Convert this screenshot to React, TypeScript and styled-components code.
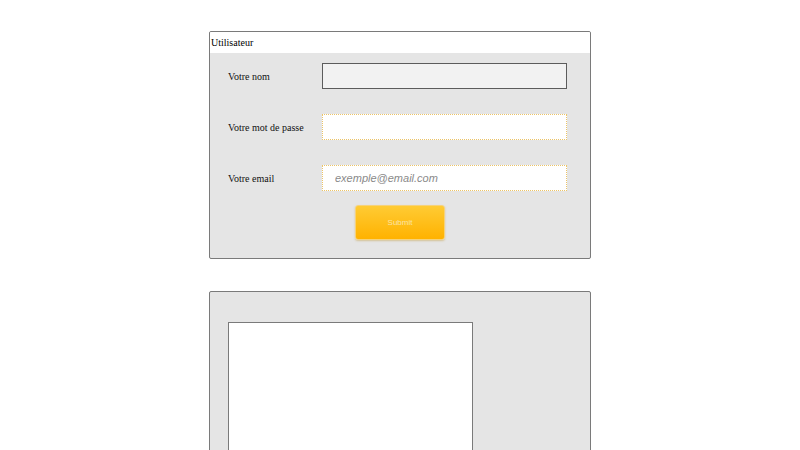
import styled, { createGlobalStyle } from 'styled-components';

const GlobalStyle = createGlobalStyle`
  html, body {
    margin: 0;
    padding: 0;
    background: #ffffff;
  }
  body {
    font-family: "Liberation Serif", "Times New Roman", serif;
    overflow: hidden;
  }
`;

const Page = styled.div`
  display: flex;
  flex-direction: column;
  align-items: center;
  gap: 32px;
  padding-top: 31px;
  height: 450px;
  box-sizing: border-box;
`;

const Panel = styled.section`
  width: 382px;
  box-sizing: border-box;
  border: 1px solid #7a7a7a;
  border-radius: 2px;
  background: #e5e5e5;
  overflow: hidden;
  flex-shrink: 0;
`;

const PanelHeader = styled.div`
  background: #ffffff;
  height: 21px;
  line-height: 21px;
  padding-left: 1px;
  font-size: 10px;
  color: #000;
`;

const Form = styled.form`
  display: flex;
  flex-direction: column;
  gap: 25px;
  padding: 10px 23px 18px 18px;
`;

const Row = styled.div`
  display: flex;
  align-items: center;
`;

const Label = styled.label`
  width: 94px;
  font-size: 10px;
  color: #111;
`;

const Input = styled.input<{ $locked?: boolean }>`
  width: 245px;
  height: 26px;
  box-sizing: border-box;
  padding: 0 12px;
  font-family: "Liberation Sans", Arial, sans-serif;
  font-size: 11px;
  outline: none;
  border-radius: 0;
  background: ${(p) => (p.$locked ? '#f2f2f2' : '#ffffff')};
  border: ${(p) => (p.$locked ? '1px solid #5c5c5c' : '1px dotted #ecc468')};

  &::placeholder {
    color: #8a8a8a;
    font-style: italic;
  }
`;

const Actions = styled.div`
  display: flex;
  padding-left: 127px;
  margin-top: -11px;
`;

const Submit = styled.button`
  width: 90px;
  height: 35px;
  box-sizing: border-box;
  border: 1px solid #f6d27a;
  border-radius: 3px;
  background: linear-gradient(to bottom, #ffcb34 0%, #ffb200 100%);
  box-shadow: 0 1px 2px rgba(180, 130, 0, 0.35);
  color: #fbe4a6;
  font-family: "Liberation Sans", Arial, sans-serif;
  font-size: 8px;
  cursor: pointer;
`;

const PreviewPanel = styled(Panel)`
  height: 200px;
  padding: 30px 0 0 18px;
`;

const PreviewBox = styled.div`
  width: 245px;
  height: 200px;
  box-sizing: border-box;
  background: #ffffff;
  border: 1px solid #7a7a7a;
`;

const App = () => {
  return (
    <>
      <GlobalStyle />
      <Page>
        <Panel>
          <PanelHeader>Utilisateur</PanelHeader>
          <Form onSubmit={(e) => e.preventDefault()}>
            <Row>
              <Label htmlFor="nom">Votre nom</Label>
              <Input id="nom" $locked readOnly />
            </Row>
            <Row>
              <Label htmlFor="pass">Votre mot de passe</Label>
              <Input id="pass" type="password" />
            </Row>
            <Row>
              <Label htmlFor="email">Votre email</Label>
              <Input id="email" type="email" placeholder="exemple@email.com" />
            </Row>
            <Actions>
              <Submit type="submit">Submit</Submit>
            </Actions>
          </Form>
        </Panel>
        <PreviewPanel>
          <PreviewBox />
        </PreviewPanel>
      </Page>
    </>
  );
};

export default App;
